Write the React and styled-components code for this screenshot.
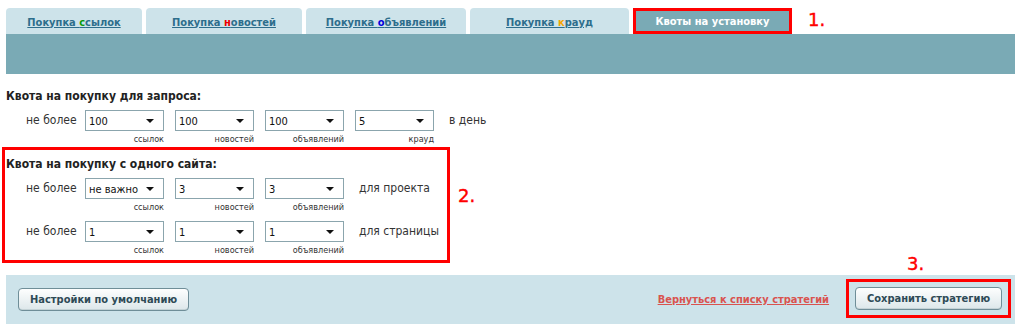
import React from 'react';
import styled, { createGlobalStyle } from 'styled-components';

const GlobalStyle = createGlobalStyle`
  body {
    margin: 0;
    background: #fff;
    font-family: "DejaVu Sans Condensed", "DejaVu Sans", sans-serif;
    color: #333;
  }
`;

const Page = styled.div`
  width: 1024px;
  height: 329px;
  position: relative;
  overflow: hidden;
`;

const TabsRow = styled.div`
  display: flex;
  align-items: flex-end;
  gap: 4px;
  padding: 8px 0 0 6px;
  height: 34px;
  box-sizing: border-box;
`;

const Tab = styled.a`
  display: flex;
  align-items: center;
  justify-content: center;
  width: ${(p) => p.$w}px;
  height: 26px;
  box-sizing: border-box;
  border-radius: ${(p) => (p.$active ? '0' : '4px 4px 0 0')};
  background: ${(p) => (p.$active ? '#7aaab5' : '#cde3ea')};
  color: ${(p) => (p.$active ? '#fff' : '#2d6e8c')};
  font-size: 11px;
  font-weight: bold;
  text-decoration: ${(p) => (p.$active ? 'none' : 'underline')};
  border: ${(p) => (p.$active ? '3px solid #f00' : 'none')};
  padding-top: ${(p) => (p.$active ? '0' : '2px')};
`;

const Mark = styled.span`
  color: ${(p) => p.$c};
`;

const Note = styled.span`
  color: #f00;
  font-family: "DejaVu Sans", sans-serif;
  font-size: 18px;
  line-height: 1;
  -webkit-text-stroke: 0.4px #f00;
`;

const TabNote = styled(Note)`
  align-self: center;
  margin-left: 12px;
  margin-top: -2px;
`;

const Band = styled.div`
  margin: 0 9px 0 6px;
  height: 40px;
  background: #7aaab5;
`;

const Section = styled.div`
  padding: 15px 0 0 6px;
`;

const Heading = styled.div`
  font-size: 12px;
  font-weight: bold;
  color: #222;
  height: 15px;
  line-height: 15px;
`;

const Row = styled.div`
  display: flex;
  align-items: flex-start;
  margin-top: ${(p) => p.$top}px;
  padding-left: 20px;
`;

const RowLabel = styled.span`
  width: 59px;
  font-size: 12px;
  line-height: 21px;
  color: #333;
`;

const Cell = styled.div`
  display: flex;
  flex-direction: column;
  align-items: flex-end;
  margin-right: 11px;
`;

const Select = styled.div`
  width: 79px;
  height: 21px;
  box-sizing: border-box;
  border: 1px solid #8ba5ad;
  background: #fff;
  display: flex;
  align-items: center;
  justify-content: space-between;
  padding: 1px 9px 0 3px;
  font-size: 11px;
  color: #111;
`;

const Arrow = styled.span`
  width: 0;
  height: 0;
  border-left: 4px solid transparent;
  border-right: 4px solid transparent;
  border-top: 4px solid #111;
`;

const Caption = styled.span`
  font-size: 9px;
  line-height: 12px;
  height: 12px;
  margin-top: 2px;
  color: #333;
`;

const Tail = styled.span`
  font-size: 12px;
  line-height: 21px;
  margin-left: 4px;
  color: #333;
`;

const BoxWrap = styled.div`
  display: flex;
  align-items: center;
  margin-top: 2px;
`;

const Box = styled.div`
  margin-left: 2px;
  width: 448px;
  box-sizing: border-box;
  border: 3px solid #f00;
  padding: 7px 0 4px 1px;
`;

const BoxNote = styled(Note)`
  margin-left: 8px;
  margin-top: -18px;
`;

const Footer = styled.div`
  margin: 12px 9px 0 6px;
  height: 49px;
  background: #cde3ea;
  display: flex;
  align-items: center;
  padding: 0 12px;
  box-sizing: border-box;
  position: relative;
`;

const Button = styled.button`
  height: 23px;
  padding: 0 11px;
  border: 1px solid #6f8e98;
  border-radius: 4px;
  background: linear-gradient(#fdfefe, #dde7ea);
  color: #2e4a56;
  font-family: inherit;
  font-size: 11px;
  font-weight: bold;
  box-shadow: inset 0 -1px 0 #c4d2d6;
`;

const BackLink = styled.a`
  margin-left: auto;
  color: #d9534f;
  font-size: 11px;
  font-weight: bold;
  text-decoration: underline;
`;

const SaveWrap = styled.div`
  margin-left: 17px;
  margin-right: -8px;
  margin-top: -2px;
  padding: 5px 6px;
  border: 3px solid #f00;
  position: relative;
  display: flex;
`;

const SaveNote = styled(Note)`
  position: absolute;
  top: -27px;
  left: 58px;
`;

const quotaCells = [
  ['100', 'ссылок'],
  ['100', 'новостей'],
  ['100', 'объявлений'],
  ['5', 'крауд'],
];

const siteRows = [
  {
    tail: 'для проекта',
    cells: [
      ['не важно', 'ссылок'],
      ['3', 'новостей'],
      ['3', 'объявлений'],
    ],
  },
  {
    tail: 'для страницы',
    cells: [
      ['1', 'ссылок'],
      ['1', 'новостей'],
      ['1', 'объявлений'],
    ],
  },
];

const QuotaCell = ({ value, caption }) => (
  <Cell>
    <Select>
      <span>{value}</span>
      <Arrow />
    </Select>
    <Caption>{caption}</Caption>
  </Cell>
);

export default function App() {
  return (
    <Page>
      <GlobalStyle />
      <TabsRow>
        <Tab $w={136}>
          <span>
            Покупка <Mark $c="#0a9a0a">с</Mark>сылок
          </span>
        </Tab>
        <Tab $w={156}>
          <span>
            Покупка <Mark $c="#e00">н</Mark>овостей
          </span>
        </Tab>
        <Tab $w={160}>
          <span>
            Покупка <Mark $c="#00d">о</Mark>бъявлений
          </span>
        </Tab>
        <Tab $w={159}>
          <span>
            Покупка <Mark $c="#f4a600">к</Mark>рауд
          </span>
        </Tab>
        <Tab $w={159} $active>
          Квоты на установку
        </Tab>
        <TabNote>1.</TabNote>
      </TabsRow>
      <Band />

      <Section>
        <Heading>Квота на покупку для запроса:</Heading>
        <Row $top={6}>
          <RowLabel>не более</RowLabel>
          {quotaCells.map(([v, c]) => (
            <QuotaCell key={c} value={v} caption={c} />
          ))}
          <Tail>в день</Tail>
        </Row>
      </Section>

      <BoxWrap>
        <Box>
          <Heading>Квота на покупку с одного сайта:</Heading>
          {siteRows.map((row, i) => (
            <Row key={i} $top={i === 0 ? 6 : 8}>
              <RowLabel>не более</RowLabel>
              {row.cells.map(([v, c]) => (
                <QuotaCell key={c} value={v} caption={c} />
              ))}
              <Tail>{row.tail}</Tail>
            </Row>
          ))}
        </Box>
        <BoxNote>2.</BoxNote>
      </BoxWrap>

      <Footer>
        <Button>Настройки по умолчанию</Button>
        <BackLink>Вернуться к списку стратегий</BackLink>
        <SaveWrap>
          <SaveNote>3.</SaveNote>
          <Button>Сохранить стратегию</Button>
        </SaveWrap>
      </Footer>
    </Page>
  );
}
